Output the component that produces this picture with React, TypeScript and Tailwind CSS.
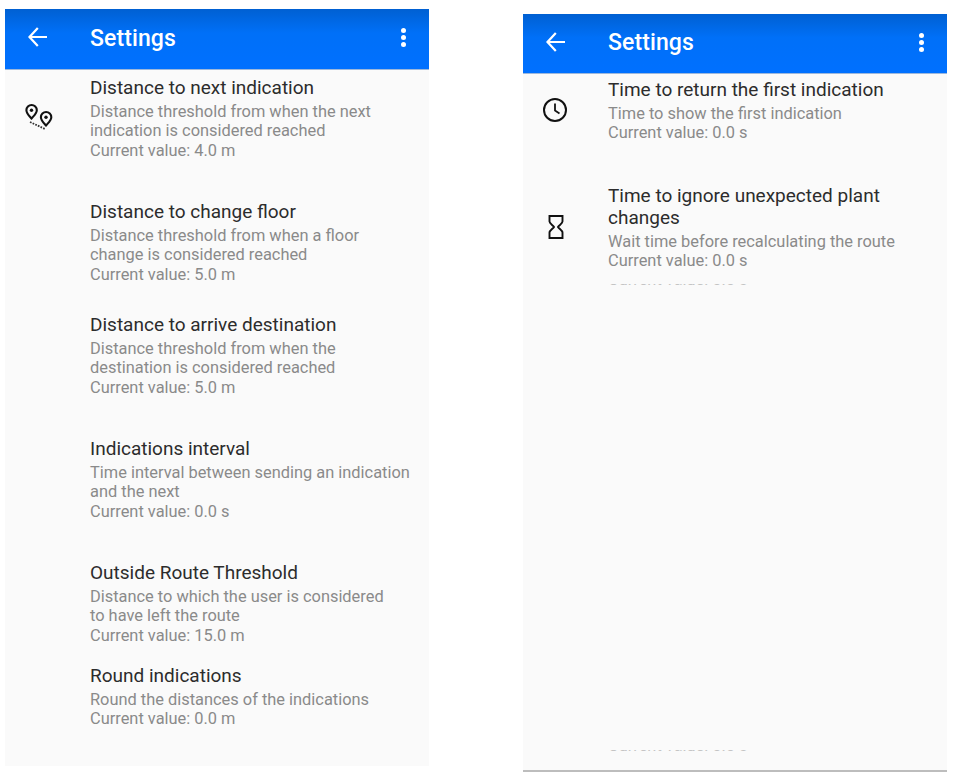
import React from "react";

function Back() {
  return (
    <svg width="24" height="24" viewBox="0 0 24 24" fill="none" stroke="#fff" strokeWidth="2.2" className="block -mt-[4px]">
      <path d="M20 12H3M10.8 3 2.500 12l8.300 9" />
    </svg>
  );
}

function Kebab() {
  return (
    <div className="flex flex-col gap-[2px] -mt-[3px]">
      <span className="block w-[5px] h-[5px] rounded-full bg-white" />
      <span className="block w-[5px] h-[5px] rounded-full bg-white" />
      <span className="block w-[5px] h-[5px] rounded-full bg-white" />
    </div>
  );
}

function Pins() {
  return (
    <svg width="32" height="32" viewBox="0 0 32 32" fill="none" className="block">
      <path d="M8.5 17.5C5.6 14.2 3.4 12.2 3.4 9.2a5.2 5.2 0 0 1 10.4 0c0 3-2.4 5-5.3 8.300Z" stroke="#111" strokeWidth="2.1" />
      <circle cx="8.5" cy="9.2" r="1.7" fill="#111" />
      <path d="M23 24.5C20.1 21.2 17.9 19.2 17.9 16.2a5.2 5.2 0 0 1 10.4 0c0 3-2.4 5-5.3 8.300Z" stroke="#111" strokeWidth="2.1" />
      <circle cx="23" cy="16.2" r="1.7" fill="#111" />
      <path d="M7 21 22 28" stroke="#333" strokeWidth="1.8" strokeDasharray="1.7 1.2" />
    </svg>
  );
}

function Clock() {
  return (
    <svg width="26" height="26" viewBox="0 0 26 26" fill="none" stroke="#111" className="block">
      <circle cx="13" cy="13" r="11" strokeWidth="2" />
      <path d="M13 6.5V13.5L17.5 16.5" strokeWidth="1.8" />
    </svg>
  );
}

function Hourglass() {
  return (
    <svg width="18" height="26" viewBox="0 0 18 26" fill="none" stroke="#111" strokeWidth="1.9" className="block">
      <path d="M2.5 2h13v5.5c0 2-3.5 3.8-4.5 5.5 1 1.700 4.500 3.500 4.500 5.500V24h-13v-5.500c0-2 3.500-3.800 4.500-5.500-1-1.700-4.500-3.500-4.500-5.500Z" />
    </svg>
  );
}

type RowProps = {
  title: string[];
  lines: string[];
  height: string;
  icon?: React.ReactNode;
  iconClass?: string;
};

function Row({ title, lines, height, icon, iconClass }: RowProps) {
  return (
    <div className={`relative pl-[85px] pr-2 ${height}`}>
      {icon && <div className={`absolute ${iconClass}`}>{icon}</div>}
      {title.map((t) => (
        <div key={t} className="text-[19px] leading-[22px] text-[#2c2c2c] whitespace-nowrap">
          {t}
        </div>
      ))}
      <div className="mt-[3px]">
        {lines.map((l) => (
          <div key={l} className="text-[16.4px] leading-[19.4px] text-[#8a8a8a] whitespace-nowrap">
            {l}
          </div>
        ))}
      </div>
    </div>
  );
}

function Header({ height }: { height: string }) {
  return (
    <div className={`${height} shrink-0 flex items-center pl-[22px] pr-[23px] bg-gradient-to-b from-[#0060d2] via-[#0070f8] via-40% to-[#0070ff] border-b border-[#9db8dc]`}>
      <Back />
      <div className="ml-[39px] flex-1 text-[23px] font-medium text-white tracking-[0.1px]">Settings</div>
      <Kebab />
    </div>
  );
}

function Clipped({ className }: { className: string }) {
  return (
    <div className={`h-[2px] overflow-hidden pl-[85px] ${className}`}>
      <div className="-mt-[14px] text-[16.4px] leading-[19px] text-[#c4c4c4] whitespace-nowrap">Current value: 0.0 s</div>
    </div>
  );
}

export default function App() {
  return (
    <div className="w-[966px] h-[779px] bg-white overflow-hidden flex items-start pl-[5px] font-['Roboto',sans-serif]">
      <div className="w-[424px] h-[757px] mt-[9px] bg-[#fafafa] flex flex-col shrink-0">
        <Header height="h-[61px]" />
        <div className="pt-[7px]">
          <Row
            height="h-[124px]"
            icon={<Pins />}
            iconClass="left-[18px] top-[24px]"
            title={["Distance to next indication"]}
            lines={["Distance threshold from when the next", "indication is considered reached", "Current value: 4.0 m"]}
          />
          <Row
            height="h-[113px]"
            title={["Distance to change floor"]}
            lines={["Distance threshold from when a floor", "change is considered reached", "Current value: 5.0 m"]}
          />
          <Row
            height="h-[124px]"
            title={["Distance to arrive destination"]}
            lines={["Distance threshold from when the", "destination is considered reached", "Current value: 5.0 m"]}
          />
          <Row
            height="h-[124px]"
            title={["Indications interval"]}
            lines={["Time interval between sending an indication", "and the next", "Current value: 0.0 s"]}
          />
          <Row
            height="h-[103px]"
            title={["Outside Route Threshold"]}
            lines={["Distance to which the user is considered", "to have left the route", "Current value: 15.0 m"]}
          />
          <Row
            height="h-[90px]"
            title={["Round indications"]}
            lines={["Round the distances of the indications", "Current value: 0.0 m"]}
          />
        </div>
      </div>
      <div className="w-[424px] h-[758px] mt-[14px] ml-[94px] bg-[#fafafa] flex flex-col shrink-0 border-b-2 border-[#bdbdbd]">
        <Header height="h-[60px]" />
        <div className="pt-[5px] flex-1 flex flex-col">
          <Row
            height="h-[106px]"
            icon={<Clock />}
            iconClass="left-[19px] top-[18px]"
            title={["Time to return the first indication"]}
            lines={["Time to show the first indication", "Current value: 0.0 s"]}
          />
          <Row
            height="h-[102px]"
            icon={<Hourglass />}
            iconClass="left-[24px] top-[29px]"
            title={["Time to ignore unexpected plant", "changes"]}
            lines={["Wait time before recalculating the route", "Current value: 0.0 s"]}
          />
          <Clipped className="mt-[-3px]" />
          <div className="flex-1" />
          <Clipped className="mb-[18px]" />
        </div>
      </div>
    </div>
  );
}
